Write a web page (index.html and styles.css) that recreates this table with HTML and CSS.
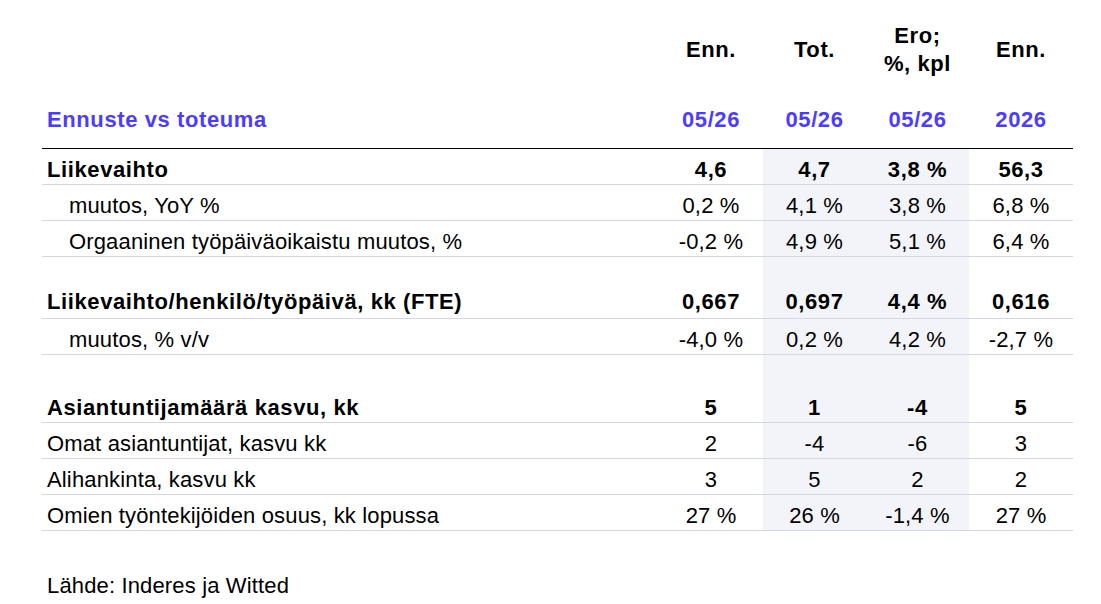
FILE: index.html
```html
<!DOCTYPE html>
<html lang="fi">
<head>
<meta charset="utf-8">
<title>Ennuste vs toteuma</title>
<link rel="stylesheet" href="styles.css">
</head>
<body>
<div class="page">
  <table class="tbl">
    <colgroup>
      <col class="c-label">
      <col class="c-num">
      <col class="c-num2">
      <col class="c-num2">
      <col class="c-num">
    </colgroup>
    <thead>
      <tr class="h1">
        <th></th>
        <th>Enn.</th>
        <th>Tot.</th>
        <th>Ero;<br>%, kpl</th>
        <th>Enn.</th>
      </tr>
      <tr class="h2">
        <th class="title">Ennuste vs toteuma</th>
        <th>05/26</th>
        <th>05/26</th>
        <th>05/26</th>
        <th>2026</th>
      </tr>
    </thead>
    <tbody>
      <tr class="row bold">
        <td class="lbl">Liikevaihto</td>
        <td>4,6</td><td class="sh">4,7</td><td class="sh">3,8 %</td><td>56,3</td>
      </tr>
      <tr class="row">
        <td class="lbl ind">muutos, YoY %</td>
        <td>0,2 %</td><td class="sh">4,1 %</td><td class="sh">3,8 %</td><td>6,8 %</td>
      </tr>
      <tr class="row">
        <td class="lbl ind">Orgaaninen työpäiväoikaistu muutos, %</td>
        <td>-0,2 %</td><td class="sh">4,9 %</td><td class="sh">5,1 %</td><td>6,4 %</td>
      </tr>
      <tr class="spacer s1">
        <td></td><td></td><td class="sh"></td><td class="sh"></td><td></td>
      </tr>
      <tr class="row bold tall">
        <td class="lbl">Liikevaihto/henkilö/työpäivä, kk (FTE)</td>
        <td>0,667</td><td class="sh">0,697</td><td class="sh">4,4 %</td><td>0,616</td>
      </tr>
      <tr class="row">
        <td class="lbl ind">muutos, % v/v</td>
        <td>-4,0 %</td><td class="sh">0,2 %</td><td class="sh">4,2 %</td><td>-2,7 %</td>
      </tr>
      <tr class="spacer s2">
        <td></td><td></td><td class="sh"></td><td class="sh"></td><td></td>
      </tr>
      <tr class="row bold">
        <td class="lbl">Asiantuntijamäärä kasvu, kk</td>
        <td>5</td><td class="sh">1</td><td class="sh">-4</td><td>5</td>
      </tr>
      <tr class="row">
        <td class="lbl">Omat asiantuntijat, kasvu kk</td>
        <td>2</td><td class="sh">-4</td><td class="sh">-6</td><td>3</td>
      </tr>
      <tr class="row">
        <td class="lbl">Alihankinta, kasvu kk</td>
        <td>3</td><td class="sh">5</td><td class="sh">2</td><td>2</td>
      </tr>
      <tr class="row">
        <td class="lbl">Omien työntekijöiden osuus, kk lopussa</td>
        <td>27 %</td><td class="sh">26 %</td><td class="sh">-1,4 %</td><td>27 %</td>
      </tr>
    </tbody>
  </table>
  <p class="source">Lähde: Inderes ja Witted</p>
</div>
</body>
</html>
```

FILE: styles.css
```css
html, body {
  margin: 0;
  padding: 0;
  background: #ffffff;
}

body {
  font-family: "Liberation Sans", Arial, sans-serif;
  font-size: 22px;
  color: #000000;
}

.page {
  padding-left: 42px;
  width: 1031px;
}

.tbl {
  width: 1031px;
  table-layout: fixed;
  border-collapse: collapse;
  border-spacing: 0;
}

.c-label { width: 617px; }
.c-num { width: 104px; }
.c-num2 { width: 103px; }

.tbl th,
.tbl td {
  padding: 0;
  line-height: 26px;
  text-align: center;
  white-space: nowrap;
}

.tbl th {
  font-weight: bold;
  letter-spacing: 0.6px;
}

.h1 th {
  height: 100px;
  vertical-align: middle;
  line-height: 28.5px;
}

.h2 th {
  height: 26px;
  padding-top: 7px;
  padding-bottom: 15px;
  vertical-align: top;
  color: #4c3cff;
  border-bottom: 1px solid #000000;
}

.h2 th.title {
  text-align: left;
  padding-left: 5px;
}

.row td {
  height: 26px;
  padding-top: 8px;
  padding-bottom: 1px;
  vertical-align: top;
  border-bottom: 1px solid #d3d7e1;
  letter-spacing: 0.15px;
}

.row.tall td {
  padding-bottom: 3px;
}

.row.bold td {
  font-weight: bold;
  letter-spacing: 0.6px;
}

.row td.lbl {
  text-align: left;
  padding-left: 5px;
}

.row td.lbl.ind {
  padding-left: 27px;
}

.spacer td {
  padding: 0;
  line-height: 0;
}

.spacer.s1 td { height: 24px; }
.spacer.s2 td { height: 32px; }

.tbl td.sh {
  background: #f2f4f9;
}

.source {
  margin: 42px 0 0 0;
  padding-left: 5px;
  line-height: 26px;
  letter-spacing: 0.15px;
}
```
